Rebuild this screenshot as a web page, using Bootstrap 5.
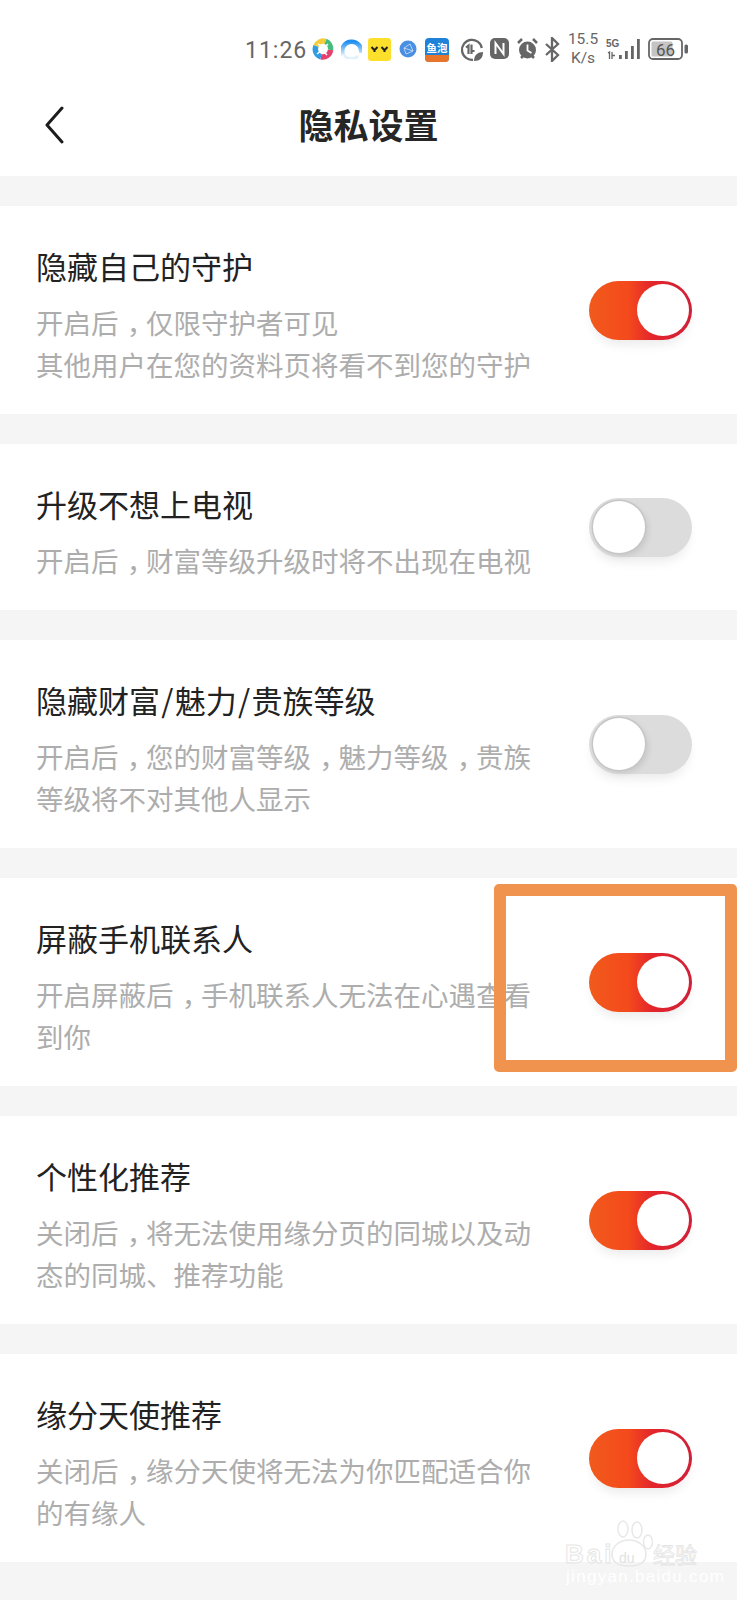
<!DOCTYPE html>
<html lang="zh-CN">
<head>
<meta charset="utf-8">
<title>隐私设置</title>
<link rel="stylesheet" href="https://cdn.jsdelivr.net/npm/bootstrap@5.3.0/dist/css/bootstrap.min.css">
<style>
html,body{background:#f5f5f5;}
body{font-family:"Noto Sans CJK SC","Liberation Sans",sans-serif;width:737px;height:1600px;overflow:hidden;position:relative;}
.top-head{background:#fff;height:176px;}
.stat-bar{height:80px;padding:30px 0 0 245px;color:#666;}
.stat-time{font-family:Roboto,sans-serif;font-size:23px;line-height:42px;letter-spacing:1px;width:67px;height:42px;}
.stat-speed{font-family:Roboto,sans-serif;font-size:15.5px;line-height:19px;text-align:center;width:34px;margin:0 6px 0 6px;}
.stat-bar svg{display:block;flex:none;}
.nav-line{height:96px;position:relative;}
.page-title{font-size:35px;font-weight:700;line-height:88px;color:#262626;margin:0;text-align:center;}
.back-btn{position:absolute;left:44px;top:26px;}
.set-row{background:#fff;margin-top:30px;padding:0 45px 0 36px;}
.row-text{padding:38px 0 29px;}
.row-name{font-size:31px;font-weight:400;line-height:44px;color:#222;margin:0 0 13px;}
.row-desc{font-size:27.5px;line-height:42px;color:#adadad;margin:0;width:502px;}
.cn-comma{font-feature-settings:"halt";padding:0 .2em 0 .3em;}
.row-slash{padding:0 1.3px;}
.tog{display:block;flex:none;width:103px;height:59px;border-radius:30px;position:relative;box-shadow:0 8px 12px -4px rgba(0,0,0,.09);}
.tog-on{background:linear-gradient(90deg,#f15a1c 0%,#f44a1c 38%,#e3252c 62%,#cf2037 100%);}
.tog-off{background:#dcdcdc;}
.tog-knob{position:absolute;top:3.5px;width:52px;height:52px;border-radius:50%;background:#fff;}
.tog-on .tog-knob{right:3.500px;}
.tog-off .tog-knob{left:3.500px;box-shadow:0 0 0 1.500px #c6c6c6,3px 3px 6px rgba(0,0,0,.1);}
.hi-box{position:absolute;left:494px;top:884px;width:243px;height:188px;border:12px solid #f0934f;border-radius:5px;pointer-events:none;}
.wm-wrap{position:absolute;left:565px;top:1518px;width:134px;height:66px;pointer-events:none;}
.wm-paw{position:absolute;left:45px;top:2px;}
.wm-bai{position:absolute;left:0;top:21px;font-family:"Liberation Sans",sans-serif;font-weight:700;font-size:26px;line-height:30px;letter-spacing:3px;color:transparent;-webkit-text-stroke:1px #e6e6e6;}
.wm-du{position:absolute;left:54px;top:32px;font-family:"Liberation Sans",sans-serif;font-size:14px;line-height:16px;color:#e2e2e2;}
.wm-cn{position:absolute;left:88px;top:22px;font-size:22px;line-height:26px;color:transparent;-webkit-text-stroke:.8px #e4e4e4;}
.wm-url{position:absolute;left:1px;top:50px;font-family:"Liberation Sans",sans-serif;font-size:17px;line-height:17px;letter-spacing:1.300px;color:#fff;white-space:nowrap;}
</style>
</head>
<body>
<header class="top-head">
  <div class="stat-bar d-flex align-items-start">
    <div class="stat-time">11:26</div>
    <svg width="22" height="22" viewBox="0 0 22 22" class="mt-2" style="margin-right:7px">
      <g fill="none" stroke-width="5.500">
        <path d="M4 8A8 8 0 0 1 13.500 3.400" stroke="#f6cc3a"/>
        <path d="M13.500 3.400A8 8 0 0 1 18.600 12" stroke="#45bb7c"/>
        <path d="M18.600 12A8 8 0 0 1 9 18.800" stroke="#e5406e"/>
        <path d="M9 18.800A8 8 0 0 1 4 8" stroke="#2e9be2"/>
      </g>
      <path d="M6 6l6 4 4-4M5 16l5-4 5 5" stroke="#fff" stroke-width="1.500" fill="none"/>
    </svg>
    <svg width="21" height="21" viewBox="0 0 21 21" class="mt-2" style="margin-right:6px">
      <defs><linearGradient id="qg" x1="0" y1="0" x2="0" y2="1"><stop offset="0" stop-color="#1e8ff0"/><stop offset="1" stop-color="#d8effb"/></linearGradient></defs>
      <path d="M2 17A9.500 9.500 0 1 1 20 15" fill="none" stroke="url(#qg)" stroke-width="4.500"/><path d="M3 17a9 9 0 0 0 14 1" fill="none" stroke="#dff1fa" stroke-width="3"/>
    </svg>
    <svg width="23" height="23" viewBox="0 0 23 23" class="mt-2" style="margin-right:8px">
      <rect width="23" height="23" rx="3" fill="#fde02c"/><path d="M3.500 9l3 3.200L9.500 9M6.500 12v2M13.500 9l3 3.200L19.500 9M16.500 12v2" stroke="#222" stroke-width="2" fill="none"/>
    </svg>
    <svg width="18" height="18" viewBox="0 0 18 18" style="margin:10px 8px 0 0">
      <circle cx="9" cy="9" r="8.500" fill="#4a90e2"/><path d="M5 8l6-4 3 7-7 3zM5 8l9 3" stroke="#cfe2fa" stroke-width=".8" fill="none"/>
    </svg>
    <svg width="24" height="24" viewBox="0 0 24 24" class="mt-2" style="margin-right:11px">
      <rect width="24" height="24" rx="4" fill="#1d82d8"/><path d="M0 17h24v3a4 4 0 0 1-4 4H4a4 4 0 0 1-4-4z" fill="#e8752a"/>
      <text x="12" y="14" text-anchor="middle" font-family="Noto Sans CJK SC" font-weight="700" font-size="10.500" fill="#fff">鱼泡</text>
    </svg>
    <svg width="24" height="24" viewBox="0 0 24 24" class="mt-2" style="margin-right:6px">
      <path d="M13 21.800A10 10 0 1 1 21.800 10" fill="none" stroke="#666" stroke-width="2.300"/><path d="M6 9.500l2.500-2V16M11.500 6.500V16" stroke="#666" stroke-width="2.200" fill="none"/><path d="M14 23c0-6 4-9 9-9 0 6-3 9-9 9z" fill="#666"/><path d="M11.500 13l3 0" stroke="#666" stroke-width="2"/>
    </svg>
    <svg width="19" height="21" viewBox="0 0 19 21" class="mt-2" style="margin-right:8px">
      <rect x="0" y="0" width="19" height="21" rx="5" fill="#666"/><path d="M5.500 16V5l8 11V5" stroke="#fff" stroke-width="2" fill="none"/>
    </svg>
    <svg width="21" height="22" viewBox="0 0 21 22" class="mt-2" style="margin-right:7px">
      <circle cx="10.500" cy="12" r="8.500" fill="#666"/><path d="M10.500 6.500V12.500L14.500 15" stroke="#fff" stroke-width="1.800" fill="none"/><path d="M1 5l4-4M20 5l-4-4M4 20l2-2M17 20l-2-2" stroke="#666" stroke-width="2.500"/>
    </svg>
    <svg width="15" height="25" viewBox="0 0 15 25" style="margin:7px 0 0 0">
      <path d="M1 7l12 11-6 6V1l6 6L1 18" stroke="#666" stroke-width="2.300" fill="none"/>
    </svg>
    <div class="stat-speed">15.5<br>K/s</div>
    <svg width="34" height="22" viewBox="0 0 34 22" class="mt-2" style="margin-right:8px">
      <text x="0" y="9" font-family="Liberation Sans" font-weight="700" font-size="10" fill="#666">5G</text>
      <path d="M2 15l1.500-1V21M6 14v7M6 17.500l3 0" stroke="#666" stroke-width="1.300" fill="none"/>
      <path d="M13 17h2.800v4H13zM19 13h2.800v8H19zM25 8h2.800v13H25zM31 1h2.800v20H31z" fill="#666"/>
    </svg>
    <svg width="41" height="22" viewBox="0 0 41 22" class="mt-2">
      <rect x="1" y="1" width="33" height="20" rx="4" fill="none" stroke="#666" stroke-width="1.800"/>
      <rect x="3.500" y="3.500" width="21" height="15" rx="1.500" fill="#c4c4c4"/>
      <rect x="36.500" y="6.500" width="3.500" height="9" rx="1.500" fill="#666"/>
      <text x="17.500" y="17.500" text-anchor="middle" font-family="Roboto" font-size="17" fill="#555">66</text>
    </svg>
  </div>
  <div class="nav-line">
    <svg class="back-btn" width="20" height="38" viewBox="0 0 20 38"><path d="M18 2L3 19l15 17" fill="none" stroke="#1c1c1c" stroke-width="3" stroke-linecap="round" stroke-linejoin="round"/></svg>
    <h1 class="page-title">隐私设置</h1>
  </div>
</header>
<main>
  <section class="set-row d-flex align-items-center justify-content-between">
    <div class="row-text"><h2 class="row-name">隐藏自己的守护</h2><p class="row-desc">开启后<span class="cn-comma">，</span>仅限守护者可见<br>其他用户在您的资料页将看不到您的守护</p></div>
    <span class="tog tog-on"><span class="tog-knob"></span></span>
  </section>
  <section class="set-row d-flex align-items-center justify-content-between">
    <div class="row-text"><h2 class="row-name">升级不想上电视</h2><p class="row-desc">开启后<span class="cn-comma">，</span>财富等级升级时将不出现在电视</p></div>
    <span class="tog tog-off"><span class="tog-knob"></span></span>
  </section>
  <section class="set-row d-flex align-items-center justify-content-between">
    <div class="row-text"><h2 class="row-name">隐藏财富<span class="row-slash">/</span>魅力<span class="row-slash">/</span>贵族等级</h2><p class="row-desc">开启后<span class="cn-comma">，</span>您的财富等级<span class="cn-comma">，</span>魅力等级<span class="cn-comma">，</span>贵族<br>等级将不对其他人显示</p></div>
    <span class="tog tog-off"><span class="tog-knob"></span></span>
  </section>
  <section class="set-row d-flex align-items-center justify-content-between">
    <div class="row-text"><h2 class="row-name">屏蔽手机联系人</h2><p class="row-desc">开启屏蔽后<span class="cn-comma">，</span>手机联系人无法在心遇查看<br>到你</p></div>
    <span class="tog tog-on"><span class="tog-knob"></span></span>
  </section>
  <section class="set-row d-flex align-items-center justify-content-between">
    <div class="row-text"><h2 class="row-name">个性化推荐</h2><p class="row-desc">关闭后<span class="cn-comma">，</span>将无法使用缘分页的同城以及动<br>态的同城、推荐功能</p></div>
    <span class="tog tog-on"><span class="tog-knob"></span></span>
  </section>
  <section class="set-row d-flex align-items-center justify-content-between">
    <div class="row-text"><h2 class="row-name">缘分天使推荐</h2><p class="row-desc">关闭后<span class="cn-comma">，</span>缘分天使将无法为你匹配适合你<br>的有缘人</p></div>
    <span class="tog tog-on"><span class="tog-knob"></span></span>
  </section>
</main>
<div class="hi-box"></div>
<div class="wm-wrap">
  <svg class="wm-paw" width="44" height="48" viewBox="0 0 44 48" fill="none" stroke="#e8e8e8" stroke-width="1.500">
    <ellipse cx="13" cy="9" rx="5" ry="8"/><ellipse cx="27" cy="10" rx="5" ry="8"/><ellipse cx="38" cy="22" rx="4.500" ry="7"/><path d="M2 34c0-8 8-14 17-14s17 6 17 14-6 12-17 12S2 42 2 34z"/>
  </svg>
  <div class="wm-bai">Bai</div>
  <div class="wm-du">du</div>
  <div class="wm-cn">经验</div>
  <div class="wm-url">jingyan.baidu.com</div>
</div>
<script src="https://cdn.jsdelivr.net/npm/bootstrap@5.3.0/dist/js/bootstrap.bundle.min.js"></script>
</body>
</html>
